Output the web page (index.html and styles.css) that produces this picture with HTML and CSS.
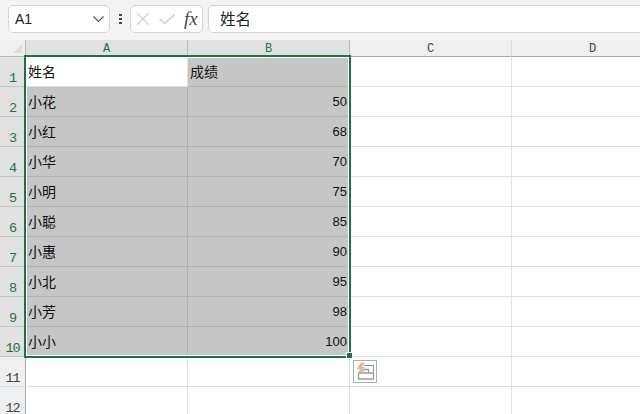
FILE: index.html
```html
<!DOCTYPE html>
<html lang="zh">
<head>
<meta charset="utf-8">
<title>Sheet</title>
<link rel="stylesheet" href="styles.css">
</head>
<body>
<div class="app">
  <div class="formula-bar">
    <div class="name-box"><span class="name-text">A1</span>
      <svg class="chev" width="11" height="6" viewBox="0 0 11 6"><path d="M.5.5l5 5 5-5" fill="none" stroke="#555" stroke-width="1.1"/></svg>
    </div>
    <div class="dots"><i></i><i></i><i></i></div>
    <div class="fx-box">
      <svg class="cross" width="12" height="12" viewBox="0 0 12 12"><path d="M0 0l12 12M12 0L0 12" fill="none" stroke="#c8c8c8" stroke-width="1.1"/></svg>
      <svg class="check" width="16" height="10" viewBox="0 0 16 10"><path d="M.5 4.5l5 5L15.5.5" fill="none" stroke="#c8c8c8" stroke-width="1.1"/></svg>
      <span class="fx">fx</span>
    </div>
    <div class="formula-input">姓名</div>
  </div>
  <div class="sheet">
    <div class="corner"><span class="tri"></span></div>
    <div class="ch sel">A</div><div class="ch sel">B</div><div class="ch">C</div><div class="ch">D</div>

    <div class="rh sel">1</div><div class="c active">姓名</div><div class="c s">成绩</div><div class="c"></div><div class="c"></div>
    <div class="rh sel">2</div><div class="c s">小花</div><div class="c s n">50</div><div class="c"></div><div class="c"></div>
    <div class="rh sel">3</div><div class="c s">小红</div><div class="c s n">68</div><div class="c"></div><div class="c"></div>
    <div class="rh sel">4</div><div class="c s">小华</div><div class="c s n">70</div><div class="c"></div><div class="c"></div>
    <div class="rh sel">5</div><div class="c s">小明</div><div class="c s n">75</div><div class="c"></div><div class="c"></div>
    <div class="rh sel">6</div><div class="c s">小聪</div><div class="c s n">85</div><div class="c"></div><div class="c"></div>
    <div class="rh sel">7</div><div class="c s">小惠</div><div class="c s n">90</div><div class="c"></div><div class="c"></div>
    <div class="rh sel">8</div><div class="c s">小北</div><div class="c s n">95</div><div class="c"></div><div class="c"></div>
    <div class="rh sel">9</div><div class="c s">小芳</div><div class="c s n">98</div><div class="c"></div><div class="c"></div>
    <div class="rh sel">10</div><div class="c s">小小</div><div class="c s n">100</div><div class="c"></div><div class="c"></div>
    <div class="rh">11</div><div class="c"></div><div class="c"></div><div class="c"></div><div class="c"></div>
    <div class="rh">12</div><div class="c"></div><div class="c"></div><div class="c"></div><div class="c"></div>

    <div class="selection"><span class="handle"></span></div>
    <div class="quick">
      <svg width="22" height="21" viewBox="0 0 22 21">
        <path d="M10 4.500h9.500v7" fill="none" stroke="#9a9a9a" stroke-width="1.2"/>
        <path d="M4.500 12h15v6h-15zM8.500 8.500h6v3.500" fill="none" stroke="#9a9a9a" stroke-width="1.300"/>
        <rect x="7" y="8" width="3" height="3" fill="#c4c4c4"/>
        <path d="M7 1.500L3 8h3L4 13 11 6H8L11 1.500z" fill="#f4b183"/>
      </svg>
    </div>
  </div>
</div>
</body>
</html>
```
FILE: styles.css
```css
html, body { margin: 0; padding: 0; background: #fff; overflow: hidden; }
.app { width: 640px; height: 414px; overflow: hidden; font-family: "Noto Sans CJK SC", "Liberation Sans", sans-serif; }
.formula-bar { height: 40px; box-sizing: border-box; display: flex; align-items: flex-start; padding: 5px 0 0 8px; background: #f3f3f3; }
.name-box { width: 102px; height: 28px; box-sizing: border-box; background: #fff; border: 1px solid #d4d4d4; border-radius: 5px; display: flex; align-items: center; justify-content: space-between; padding: 0 5px 0 6px; font: 14px "Liberation Sans", sans-serif; color: #222; }
.dots { width: 20px; height: 28px; display: flex; flex-direction: column; align-items: center; justify-content: center; gap: 2px; }
.dots i { width: 3px; height: 2px; background: #444; }
.fx-box { width: 73px; height: 28px; margin-right: 5px; box-sizing: border-box; background: #fff; border: 1px solid #d4d4d4; border-radius: 5px; display: flex; align-items: center; padding-left: 6px; }
.check { margin-left: 10px; }
.fx { font: italic 19px "Liberation Serif", serif; color: #444; margin-left: 9px; }
.formula-input { flex: 1; height: 28px; box-sizing: border-box; background: #fff; border: 1px solid #d4d4d4; border-right: 0; border-radius: 5px 0 0 5px; padding-left: 11px; font-size: 15.500px; line-height: 25px; color: #222; }
.sheet { position: relative; display: grid; grid-template-columns: 26px 162px 162px 162px 162px; grid-template-rows: 17px repeat(12, 30px); background: #fff; }
.corner { background: #efefef; border-right: 1px solid #b8b8b8; border-bottom: 1px solid #b8b8b8; box-sizing: border-box; position: relative; }
.tri { position: absolute; right: 3px; bottom: 3px; width: 0; height: 0; border-left: 9px solid transparent; border-bottom: 9px solid #dcdcdc; }
.ch { background: #eeeff0; border-right: 1px solid #dcdcdc; border-bottom: 1px solid #aaa; box-sizing: border-box; text-align: center; font: 12px/18px "Liberation Mono", monospace; color: #444; }
.ch.sel { background: #e1e1e1; color: #1f7246; border-right-color: #b8b8b8; }
.rh { background: #eeeff0; border-right: 1px solid #aaa; border-bottom: 1px solid #dcdcdc; box-sizing: border-box; text-align: center; font: 13.500px/1 "Liberation Mono", monospace; letter-spacing: -1px; color: #444; padding-top: 15px; }
.rh.sel { background: #e1e1e1; color: #1f7246; border-bottom-color: #c4c4c4; }
.c { box-sizing: border-box; border-right: 1px solid #e0e0e0; border-bottom: 1px solid #e0e0e0; font-size: 14px; line-height: 28px; padding: 0 2px; color: #111; white-space: nowrap; }
.c.s { background: #c6c6c6; border-color: #b0b0b0; }
.c.n { text-align: right; font-family: "Liberation Sans", sans-serif; font-size: 13px; line-height: 30px; }
.selection { position: absolute; left: 24px; top: 15px; width: 323px; height: 299px; border: 2px solid #1f7246; box-shadow: inset 0 0 0 1px #fff; pointer-events: none; }
.handle { position: absolute; right: -4px; bottom: -3px; width: 5px; height: 5px; background: #1f7246; border: 1px solid #fff; }
.quick { position: absolute; left: 353px; top: 320px; width: 24px; height: 23px; box-sizing: border-box; border: 1px solid #8fbf9f; background: #fff; }
.quick svg { display: block; }
```
